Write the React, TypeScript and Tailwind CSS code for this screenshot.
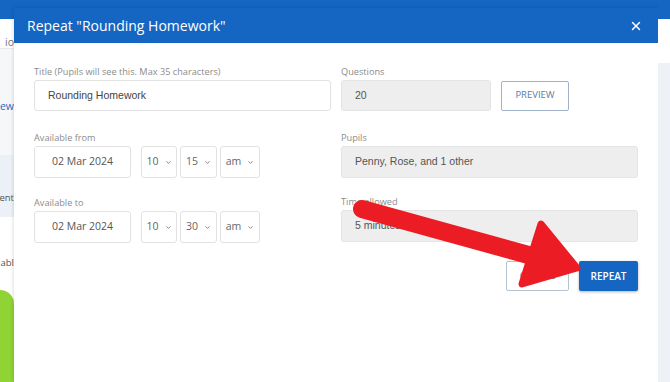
import { X, ChevronDown } from 'lucide-react';

const sans = { fontFamily: '"Open Sans", "Liberation Sans", sans-serif' };
const arial = { fontFamily: '"Liberation Sans", Arial, sans-serif' };

function Label({ children }: { children: React.ReactNode }) {
  return (
    <div className="h-[13px] mb-[2px] text-[9.2px] leading-[13px] text-[#8c8c8c]" style={sans}>
      {children}
    </div>
  );
}

function Select({ value, width }: { value: string; width: string }) {
  return (
    <div
      className={`${width} h-[32px] flex items-center justify-center gap-[6px] border border-[#e2e2e2] rounded-[3px] bg-white text-[10.5px] text-[#666]`}
      style={sans}
    >
      <span>{value}</span>
      <ChevronDown className="w-[7px] h-[7px] text-[#777]" strokeWidth={3} />
    </div>
  );
}

function DateRow({ date, hour, minute }: { date: string; hour: string; minute: string }) {
  return (
    <div className="flex items-center mt-[2px]">
      <div
        className="w-[97px] h-[32px] flex items-center justify-center border border-[#e2e2e2] rounded-[3px] text-[10.5px] text-[#555]"
        style={sans}
      >
        {date}
      </div>
      <div className="flex gap-[3px] ml-[10px]">
        <Select value={hour} width="w-[36px]" />
        <Select value={minute} width="w-[37px]" />
        <Select value="am" width="w-[40px]" />
      </div>
    </div>
  );
}

function ReadOnly({ value, className }: { value: string; className: string }) {
  return (
    <div
      className={`${className} flex items-center pl-[13px] bg-[#eeeeee] border border-[#e4e4e4] rounded-[3px] text-[10.5px] text-[#555]`}
      style={arial}
    >
      {value}
    </div>
  );
}

function Arrow() {
  return (
    <svg className="absolute inset-0 pointer-events-none" width="670" height="382" viewBox="0 0 670 382">
      <line x1="362" y1="209" x2="532" y2="256" stroke="#ec1c24" strokeWidth="18" strokeLinecap="round" />
      <polygon
        points="541,224 577,268 522,284"
        fill="#ec1c24"
        stroke="#ec1c24"
        strokeWidth="7"
        strokeLinejoin="round"
      />
    </svg>
  );
}

export default function App() {
  return (
    <div className="relative w-[670px] h-[382px] overflow-hidden flex bg-white">
      {/* page behind, left edge */}
      <div className="w-[14px] flex flex-col text-[9.5px] overflow-hidden" style={sans}>
        <div className="h-[19px] bg-[#1466c2]" />
        <div className="h-[29px] flex items-end justify-end text-[#777] text-[10.5px] leading-[12px] whitespace-nowrap">io</div>
        <div className="h-[107px] bg-[#f5f7f9] border-t border-[#e6e9ee] flex items-center justify-end pt-[10px] text-[#2a6bbf] text-[10.5px] whitespace-nowrap">
          ew
        </div>
        <div className="h-[62px] bg-[#ecf1f7] flex items-end justify-end pb-[12px] text-[#555] whitespace-nowrap">ent</div>
        <div className="h-[73px] flex items-start justify-end pt-[39px] text-[#555] whitespace-nowrap">abl</div>
        <div className="flex-1 bg-[#8fd334] rounded-tr-[16px]" />
      </div>

      {/* modal */}
      <div className="w-[644px] flex flex-col">
        <div className="h-[8px] bg-[#1466c2]" />
        <div className="flex-1 bg-white shadow-[0_0_4px_rgba(0,0,0,0.18)] flex flex-col">
          <div className="h-[35px] bg-[#1466c2] flex items-center justify-between pl-[13px] pr-[15px]">
            <span className="text-white text-[14px]" style={sans}>
              Repeat "Rounding Homework"
            </span>
            <X className="w-[14px] h-[14px] text-white" strokeWidth={2.5} />
          </div>

          <div className="px-[20px] pt-[22px]">
            <div className="grid grid-cols-2 gap-x-[10px]">
              <div>
                <Label>Title (Pupils will see this. Max 35 characters)</Label>
                <div
                  className="h-[31px] flex items-center pl-[13px] border border-[#e2e2e2] rounded-[3px] text-[10.5px] text-[#444]"
                  style={arial}
                >
                  Rounding Homework
                </div>
              </div>
              <div>
                <Label>Questions</Label>
                <div className="flex items-center gap-[10px]">
                  <ReadOnly value="20" className="w-[150px] h-[31px]" />
                  <div
                    className="w-[68px] h-[30px] flex items-center justify-center border border-[#9fb4c8] rounded-[2px] text-[9.5px] text-[#5a7ea6]"
                    style={sans}
                  >
                    PREVIEW
                  </div>
                </div>
              </div>

              <div className="mt-[20px]">
                <Label>Available from</Label>
                <DateRow date="02 Mar 2024" hour="10" minute="15" />
              </div>
              <div className="mt-[20px]">
                <Label>Pupils</Label>
                <ReadOnly value="Penny, Rose, and 1 other" className="h-[32px]" />
              </div>

              <div className="mt-[18px]">
                <Label>Available to</Label>
                <DateRow date="02 Mar 2024" hour="10" minute="30" />
              </div>
              <div className="mt-[17px]">
                <Label>Time allowed</Label>
                <ReadOnly value="5 minutes" className="h-[32px]" />
              </div>
            </div>

            <div className="flex justify-end gap-[10px] mt-[18px]">
              <div
                className="w-[63px] h-[30px] flex items-center justify-center border border-[#b5c3d1] rounded-[2px] text-[9.5px] text-[#5a7ea6]"
                style={sans}
              >
                CANCEL
              </div>
              <div
                className="w-[59px] h-[30px] flex items-center justify-center bg-[#1466c2] rounded-[2px] shadow-[0_1px_3px_rgba(0,0,0,0.3)] text-[10px] font-semibold text-white"
                style={sans}
              >
                REPEAT
              </div>
            </div>
          </div>
        </div>
      </div>

      {/* page behind, right edge */}
      <div className="w-[12px] flex flex-col">
        <div className="h-[19px] bg-[#1466c2]" />
        <div className="h-[44px] bg-white" />
        <div className="flex-1 bg-[#eef2f6]" />
      </div>

      <Arrow />
    </div>
  );
}
